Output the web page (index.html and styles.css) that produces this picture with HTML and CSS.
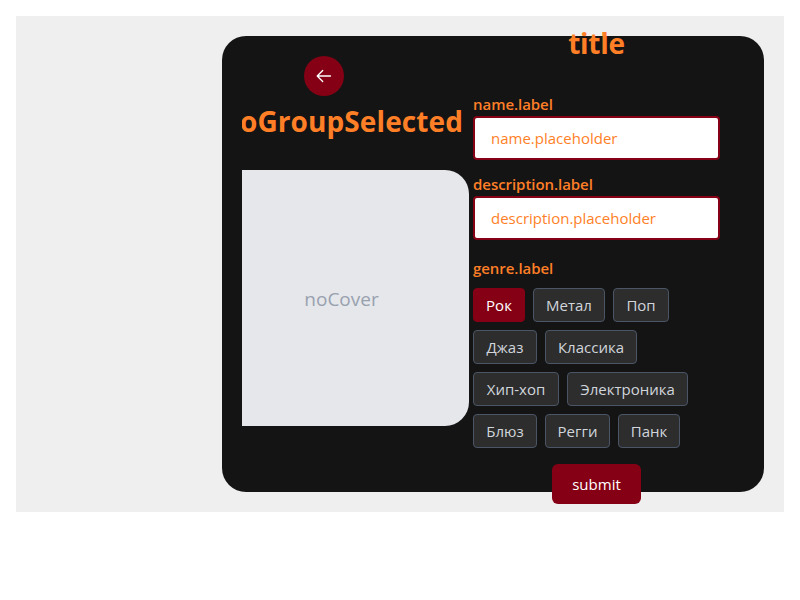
FILE: index.html
```html
<!DOCTYPE html>
<html lang="ru">
<head>
<meta charset="utf-8">
<title>title</title>
<link rel="stylesheet" href="styles.css">
</head>
<body>
<main class="page">
  <section class="card">
    <div class="preview">
      <button class="back" type="button" aria-label="back">
        <svg width="16" height="16" viewBox="0 0 16 16" fill="none" stroke="#fff" stroke-width="1.3" stroke-linecap="round" stroke-linejoin="round"><path d="M14.5 8H1.5M6.7 2.5 1.2 8l5.5 5.5"/></svg>
      </button>
      <h2 class="group">noGroupSelected</h2>
      <div class="cover"><span class="cover-text">noCover</span></div>
    </div>
    <form class="form">
      <h1 class="title">title</h1>
      <label class="label label-name" for="name">name.label</label>
      <input class="input input-name" id="name" placeholder="name.placeholder">
      <label class="label label-description" for="description">description.label</label>
      <input class="input input-description" id="description" placeholder="description.placeholder">
      <div class="label label-genre">genre.label</div>
      <div class="genres">
        <button type="button" class="chip chip-active rock">Рок</button>
        <button type="button" class="chip metal">Метал</button>
        <button type="button" class="chip pop">Поп</button>
        <button type="button" class="chip jazz">Джаз</button>
        <button type="button" class="chip classic">Классика</button>
        <button type="button" class="chip hiphop">Хип-хоп</button>
        <button type="button" class="chip electronic">Электроника</button>
        <button type="button" class="chip blues">Блюз</button>
        <button type="button" class="chip reggae">Регги</button>
        <button type="button" class="chip punk">Панк</button>
      </div>
      <button class="submit" type="button">submit</button>
    </form>
  </section>
</main>
</body>
</html>
```
FILE: styles.css
```css
* { box-sizing: border-box; }
body {
  margin: 0;
  padding: 16px;
  background: #fff;
  font: 15px/24px "Open Sans", "Noto Sans", sans-serif;
}
button, input { font: inherit; }
.page {
  display: flex;
  justify-content: flex-end;
  height: 496px;
  padding: 20px;
  background: #efefef;
}
.card {
  display: flex;
  width: 542px;
  height: 456px;
  padding: 0 20px;
  border-radius: 24px;
  background: #141414;
}
.preview {
  display: flex;
  flex-direction: column;
  align-items: flex-end;
  width: 227px;
  padding-top: 20px;
  overflow: hidden;
}
.back {
  display: flex;
  align-items: center;
  justify-content: center;
  align-self: flex-start;
  width: 40px;
  height: 40px;
  margin-left: 62px;
  padding: 0;
  border: 0;
  border-radius: 50%;
  background: #850014;
}
.group, .title {
  margin: 0;
  color: #ff7f27;
  font-size: 28px;
  font-weight: 700;
  line-height: 36px;
  white-space: nowrap;
}
.group {
  margin: 7px 6px 31px 0;
  letter-spacing: 0.1px;
}
.cover {
  display: flex;
  flex: none;
  align-items: center;
  justify-content: center;
  width: 256px;
  height: 256px;
  padding: 2px 0 0 1px;
  border-radius: 24px;
  background: #e5e7eb;
  color: #99a1af;
  font-size: 19px;
}
.form {
  display: flex;
  flex-direction: column;
  width: 247px;
  margin-left: 4px;
}
.title {
  margin-top: -11px;
  letter-spacing: -0.3px;
  text-align: center;
}
.label {
  height: 24px;
  color: #ff7f27;
  font-weight: 600;
  letter-spacing: -0.05px;
}
.label-name { margin-top: 31px; }
.label-description { margin-top: 12px; }
.label-genre { margin-top: 16px; }
.input {
  flex: none;
  width: 247px;
  height: 44px;
  padding: 0 16px;
  border: 2px solid #850014;
  border-radius: 4px;
  background: #fff;
}
.input::placeholder { color: #ff7f27; opacity: 1; }
.genres {
  display: flex;
  flex-wrap: wrap;
  gap: 8px;
  margin-top: 8px;
}
.chip {
  height: 34px;
  padding: 0;
  border: 1px solid #4a5565;
  border-radius: 4px;
  background: #2d2d2d;
  color: #d1d5dc;
  white-space: nowrap;
}
.chip-active {
  border-color: #850014;
  background: #850014;
  color: #fff;
}
.rock { width: 52px; }
.metal { width: 72px; }
.pop { width: 56px; }
.jazz { width: 64px; }
.classic { width: 92px; }
.hiphop { width: 86px; }
.electronic { width: 121px; }
.blues { width: 64px; }
.reggae { width: 65px; }
.punk { width: 62px; }
.submit {
  flex: none;
  align-self: center;
  width: 89px;
  height: 40px;
  margin-top: 16px;
  padding: 0;
  border: 0;
  border-radius: 6px;
  background: #850014;
  color: #fff;
}
```
